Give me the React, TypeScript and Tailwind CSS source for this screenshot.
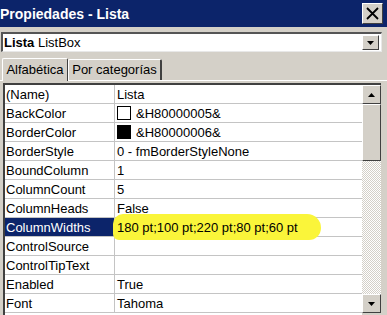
import React from "react";

const rows: { name: string; value: string; swatch?: string; selected?: boolean }[] = [
  { name: "(Name)", value: "Lista" },
  { name: "BackColor", value: "&H80000005&", swatch: "#ffffff" },
  { name: "BorderColor", value: "&H80000006&", swatch: "#000000" },
  { name: "BorderStyle", value: "0 - fmBorderStyleNone" },
  { name: "BoundColumn", value: "1" },
  { name: "ColumnCount", value: "5" },
  { name: "ColumnHeads", value: "False" },
  { name: "ColumnWidths", value: "180 pt;100 pt;220 pt;80 pt;60 pt", selected: true },
  { name: "ControlSource", value: "" },
  { name: "ControlTipText", value: "" },
  { name: "Enabled", value: "True" },
  { name: "Font", value: "Tahoma" },
];

const Arrow = ({ up }: { up?: boolean }) => (
  <svg width="7" height="4" viewBox="0 0 7 4">
    <path d={up ? "M0 4 L3.5 0 L7 4 Z" : "M0 0 L7 0 L3.5 4 Z"} fill="#000" />
  </svg>
);

const App = () => {
  return (
    <div
      className="w-[387px] h-[315px] overflow-hidden bg-[#d4d0c8] flex flex-col"
      style={{ fontFamily: '"Liberation Sans", Arial, sans-serif' }}
    >
      {/* title bar */}
      <div className="h-[27px] shrink-0 bg-[#0c246a] flex items-center justify-between pr-[4px]">
        <span className="text-white font-bold text-[14px] leading-none">Propiedades - Lista</span>
        <div className="w-[21px] h-[21px] bg-[#d4d0c8] border-t border-l border-white border-r border-b border-r-[#404040] border-b-[#404040] flex items-center justify-center">
          <svg width="13" height="13" viewBox="0 0 13 13">
            <path d="M1 1 L12 12 M12 1 L1 12" stroke="#000" strokeWidth="1.8" />
          </svg>
        </div>
      </div>

      {/* object combo */}
      <div className="mt-[5px] ml-[1px] mr-[5px] h-[20px] shrink-0 bg-white border-t-2 border-l-2 border-t-[#555] border-l-[#555] border-b border-r border-b-[#e8e8e8] border-r-[#e8e8e8] flex items-center">
        <span className="pl-[1px] text-[13px] text-black">
          <b>Lista</b> ListBox
        </span>
        <div className="ml-auto mr-[2px] w-[17px] h-[15px] bg-[#d4d0c8] border-t border-l border-white border-r border-b border-r-[#404040] border-b-[#404040] flex items-center justify-center">
          <Arrow />
        </div>
      </div>

      {/* tabs */}
      <div className="mt-[5px] h-[23px] shrink-0 flex items-end pl-[2px]">
        <div className="h-[23px] w-[66px] bg-[#d4d0c8] border-t border-l border-white border-r border-r-[#404040] rounded-t-[2px] flex items-center justify-center text-[13px] text-black relative top-[1px]">
          Alfabética
        </div>
        <div className="h-[21px] w-[94px] bg-[#d4d0c8] border-t border-l border-white border-r-2 border-r-[#404040] rounded-t-[2px] flex items-center justify-center text-[13px] text-black">
          Por categorías
        </div>
      </div>

      {/* panel */}
      <div className="flex-1 border-t border-white pl-[3px] pr-[4px] pt-[2px] flex">
        <div className="flex-1 flex border-t-2 border-l-2 border-t-[#404040] border-l-[#404040]">
          <div className="flex-1 bg-white flex flex-col">
            {rows.map((r) => (
              <div key={r.name} className="h-[19px] shrink-0 flex border-b border-[#c4c4c4] text-[13px] leading-none">
                <div
                  className={
                    r.selected
                      ? "w-[110px] shrink-0 border-r border-[#c4c4c4] bg-[#0c246a] text-white flex items-center pl-[1px]"
                      : "w-[110px] shrink-0 border-r border-[#c4c4c4] text-black flex items-center pl-[1px]"
                  }
                >
                  {r.name}
                </div>
                <div className="flex-1 relative flex items-center pl-[2px] text-black">
                  {r.selected && (
                    <div className="absolute left-[-2px] top-[-4px] w-[208px] h-[26px] bg-[#faf53a] rounded-[10px_14px_12px_6px]" />
                  )}
                  {r.swatch && (
                    <span
                      className="w-[14px] h-[14px] border border-black mr-[5px] shrink-0 relative"
                      style={{ backgroundColor: r.swatch }}
                    />
                  )}
                  <span className="relative">{r.value}</span>
                </div>
              </div>
            ))}
          </div>

          {/* scrollbar */}
          <div className="w-[19px] shrink-0 flex flex-col pb-[2px]">
            <div className="h-[19px] shrink-0 bg-[#d4d0c8] border-t border-l border-white border-r border-b border-r-[#404040] border-b-[#404040] flex items-center justify-center">
              <Arrow up />
            </div>
            <div className="h-[57px] shrink-0 bg-[#d4d0c8] border-t border-l border-white border-r border-b border-r-[#404040] border-b-[#404040]" />
            <div className="flex-1 bg-[repeating-conic-gradient(#d4d0c8_0_25%,#ffffff_0_50%)] bg-[length:2px_2px]" />
            <div className="h-[19px] shrink-0 bg-[#d4d0c8] border-t border-l border-white border-r border-b border-r-[#404040] border-b-[#404040] flex items-center justify-center">
              <Arrow />
            </div>
          </div>
        </div>
        <div className="w-[2px] shrink-0" />
      </div>
    </div>
  );
};

export default App;
